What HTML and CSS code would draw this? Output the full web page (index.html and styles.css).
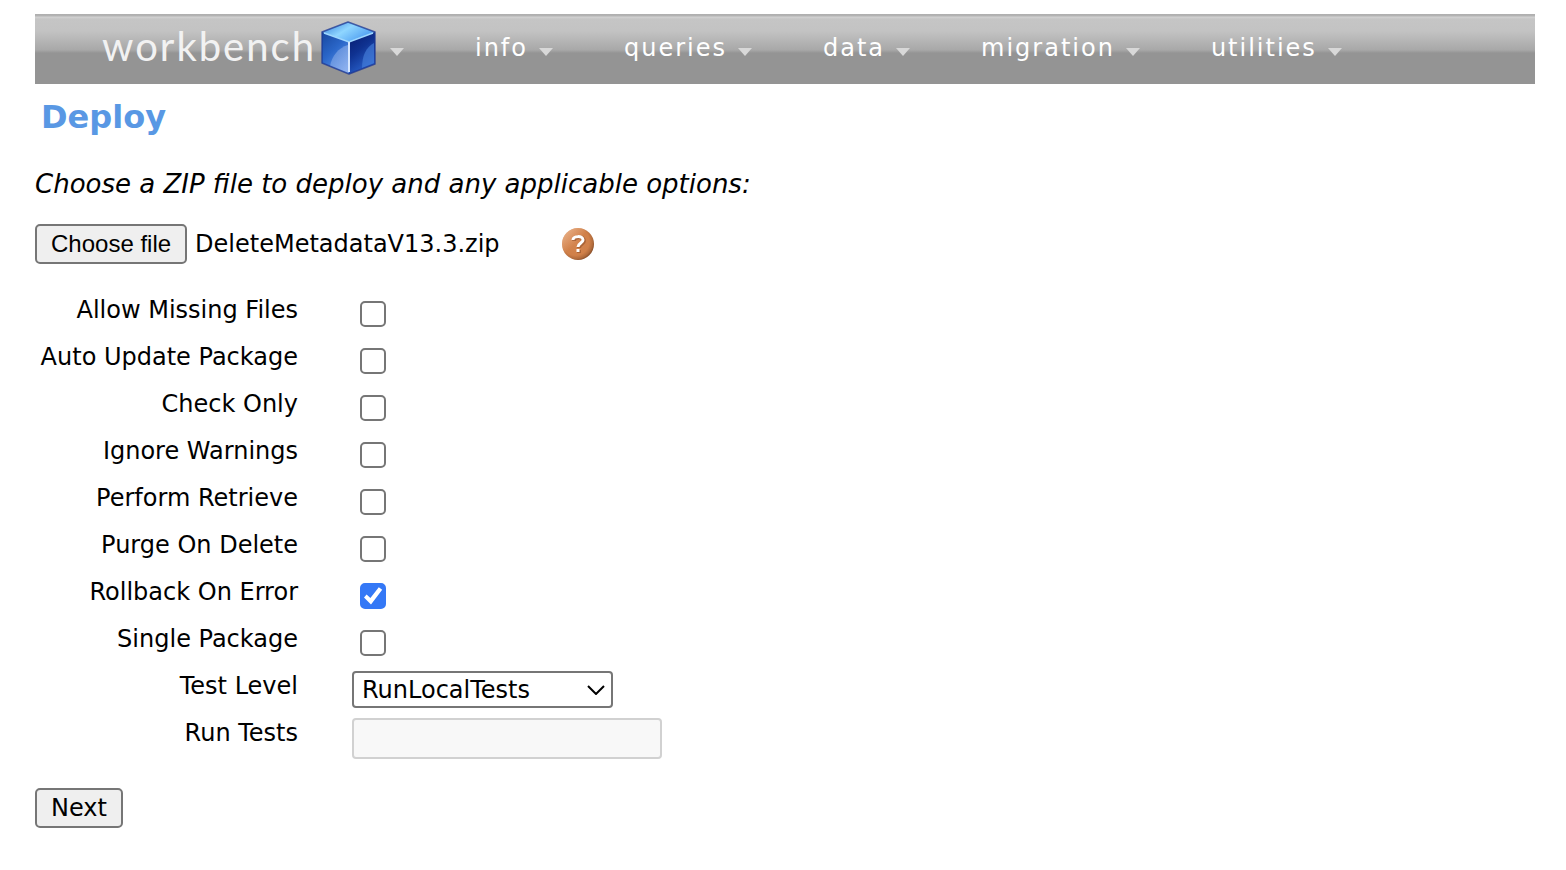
FILE: index.html
```html
<!DOCTYPE html>
<html lang="en">
<head>
<meta charset="UTF-8">
<title>Workbench - Deploy</title>
<link rel="stylesheet" href="styles.css">
</head>
<body>
	<nav class="navmenu">
		<a class="logo" href="#">
			<span class="logo-text">workbench</span>
			<svg class="cube" viewBox="0 0 58 56" aria-hidden="true">
				<defs>
					<linearGradient id="cubeTop" x1="0" y1="0" x2="1" y2="0.6">
						<stop offset="0" stop-color="#2f78d8"/>
						<stop offset="0.5" stop-color="#8fd6ff"/>
						<stop offset="1" stop-color="#4a9af0"/>
					</linearGradient>
					<linearGradient id="cubeLeft" x1="0" y1="0" x2="0.6" y2="1">
						<stop offset="0" stop-color="#17479f"/>
						<stop offset="0.5" stop-color="#2a66c8"/>
						<stop offset="1" stop-color="#5a92ea"/>
					</linearGradient>
					<linearGradient id="cubeRight" x1="0" y1="0" x2="0.5" y2="1">
						<stop offset="0" stop-color="#06196c"/>
						<stop offset="0.5" stop-color="#0f3291"/>
						<stop offset="1" stop-color="#2a62cc"/>
					</linearGradient>
					<linearGradient id="cubeShine" x1="0" y1="0" x2="1" y2="1">
						<stop offset="0" stop-color="#6f9be2"/>
						<stop offset="1" stop-color="#b4c8f2"/>
					</linearGradient>
				</defs>
				<path d="M28 2 L55 12 L29 22 L2 12 Z" fill="url(#cubeTop)"/>
				<path d="M2 12 L29 22 L29 54 L2 43 Z" fill="url(#cubeLeft)"/>
				<path d="M55 12 L29 22 L29 54 L55 44 Z" fill="url(#cubeRight)"/>
				<path d="M28 25 C18 28 12 36 10 46 L28 53 Z" fill="url(#cubeShine)" opacity="0.6"/>
				<path d="M54 23 C46 27 42 36 42 48 L54 43 Z" fill="#4a84de" opacity="0.6"/>
				<path d="M4 13 L29 22 L53 13" fill="none" stroke="#9fd8ff" stroke-width="1.5"/>
				<path d="M29 22 L29 52" fill="none" stroke="#d5e6ff" stroke-width="2"/>
				<path d="M28 2 L55 12 L55 44 L29 54 L2 43 L2 12 Z" fill="none" stroke="#1c3592" stroke-width="1.5" stroke-linejoin="round" opacity="0.75"/>
			</svg>
			<span class="arrow"></span>
		</a>
		<a href="#">info<span class="arrow"></span></a>
		<a href="#">queries<span class="arrow"></span></a>
		<a href="#">data<span class="arrow"></span></a>
		<a href="#">migration<span class="arrow"></span></a>
		<a href="#">utilities<span class="arrow"></span></a>
	</nav>

	<h1>Deploy</h1>

	<form class="deploy" onsubmit="return false">
		<p class="instructions">Choose a ZIP file to deploy and any applicable options:</p>

		<div class="file-row">
			<input type="file" id="deployFile" accept=".zip" aria-label="ZIP file" hidden>
			<button type="button" class="choose" onclick="chooseFile()">Choose file</button>
			<span id="fileName" class="file-name">DeleteMetadataV13.3.zip</span>
			<svg class="help" viewBox="0 0 32 32" role="img" aria-label="Help">
				<defs>
					<radialGradient id="helpFill" cx="0.42" cy="0.42" r="0.62">
						<stop offset="0" stop-color="#d4854f"/>
						<stop offset="0.7" stop-color="#d08049"/>
						<stop offset="0.88" stop-color="#b06a3b"/>
						<stop offset="1" stop-color="#7e4522"/>
					</radialGradient>
					<linearGradient id="helpShine" x1="0" y1="0" x2="1" y2="1">
						<stop offset="0" stop-color="#f6c9a8" stop-opacity="0.8"/>
						<stop offset="0.45" stop-color="#f6c9a8" stop-opacity="0"/>
					</linearGradient>
				</defs>
				<circle cx="16" cy="16" r="16" fill="url(#helpFill)"/>
				<circle cx="16" cy="16" r="16" fill="url(#helpShine)"/>
				<g fill="none" stroke="#8f5029" stroke-width="4" opacity="0.6">
					<path d="M12 13 C12 8 22 8 22 13 C22 16 17 16 17 20 M17 22 L17 25"/>
				</g>
				<g fill="none" stroke="#fff" stroke-width="3">
					<path d="M11 12 C11 8 21 7 21 12 C21 15 16 15 16 19 M16 21 L16 24"/>
				</g>
			</svg>
		</div>

		<div class="options">
			<div class="option">
				<label for="allowMissingFiles">Allow Missing Files</label>
				<input type="checkbox" id="allowMissingFiles">
			</div>
			<div class="option">
				<label for="autoUpdatePackage">Auto Update Package</label>
				<input type="checkbox" id="autoUpdatePackage">
			</div>
			<div class="option">
				<label for="checkOnly">Check Only</label>
				<input type="checkbox" id="checkOnly">
			</div>
			<div class="option">
				<label for="ignoreWarnings">Ignore Warnings</label>
				<input type="checkbox" id="ignoreWarnings">
			</div>
			<div class="option">
				<label for="performRetrieve">Perform Retrieve</label>
				<input type="checkbox" id="performRetrieve">
			</div>
			<div class="option">
				<label for="purgeOnDelete">Purge On Delete</label>
				<input type="checkbox" id="purgeOnDelete">
			</div>
			<div class="option">
				<label for="rollbackOnError">Rollback On Error</label>
				<input type="checkbox" id="rollbackOnError" checked>
			</div>
			<div class="option">
				<label for="singlePackage">Single Package</label>
				<input type="checkbox" id="singlePackage">
			</div>
			<div class="option">
				<label for="testLevel">Test Level</label>
				<div class="select-wrap">
					<select id="testLevel">
						<option>RunLocalTests</option>
					</select>
					<svg class="chevron" viewBox="0 0 18 10" aria-hidden="true">
						<path d="M1 1 L9 9 L17 1" fill="none" stroke="#000" stroke-width="2"/>
					</svg>
				</div>
			</div>
			<div class="option">
				<label for="runTests">Run Tests</label>
				<input type="text" id="runTests" disabled>
			</div>
		</div>

		<button type="submit" class="next">Next</button>
	</form>

	<script>
	var fileInput = document.getElementById("deployFile");

	function chooseFile() {
		fileInput.click();
	}

	fileInput.onchange = function() {
		if (fileInput.files.length > 0) {
			document.getElementById("fileName").innerText = fileInput.files[0].name;
		}
	};
	</script>
</body>
</html>
```
FILE: styles.css
```css
* {
	box-sizing: border-box;
}

body {
	margin: 14px 31px 40px 35px;
	background-color: #ffffff;
	color: #000000;
	font-family: Verdana, "DejaVu Sans", sans-serif;
	font-size: 24px;
	line-height: 30px;
}

/* top menu */
.navmenu {
	display: flex;
	align-items: center;
	gap: 71px;
	height: 70px;
	padding: 0 0 2px 67px;
	background: linear-gradient(#aeaeae 0, #b4b4b4 2px, #d2d2d2 3px, #c5c5c5 5px, #c3c3c3 17px, #a8a8a8 36px, #949494 39px, #949494 100%);
	letter-spacing: 2px;
}

.navmenu a {
	display: flex;
	align-items: center;
	color: #ffffff;
	text-decoration: none;
}

.arrow {
	margin: 7px 0 0 11px;
	border-top: 8px solid #d8d8d8;
	border-left: 7px solid transparent;
	border-right: 7px solid transparent;
}

.logo-text {
	padding-bottom: 4px;
	color: #f2f2f2;
	font-family: Lato, sans-serif;
	font-size: 40px;
}

.cube {
	width: 58px;
	height: 56px;
	margin: 0 1px 0 4px;
}

h1 {
	margin: 13px 6px 31px;
	color: #5998e4;
	font-size: 32px;
	line-height: 40px;
}

.instructions {
	margin: 0 0 24px;
	font-size: 26px;
	line-height: 32px;
	font-style: italic;
}

/* file picker */
.file-row {
	display: flex;
	align-items: center;
	margin-bottom: 31px;
}

.choose,
.next {
	height: 40px;
	padding: 0 14px;
	background-color: #efefef;
	border: 2px solid #767676;
	border-radius: 5px;
	color: #000000;
	font-family: inherit;
	font-size: 24px;
}

.choose {
	font-family: Arial, "Liberation Sans", sans-serif;
}

.file-name {
	margin-left: 8px;
}

.help {
	width: 32px;
	height: 32px;
	margin-left: 62px;
}

/* deploy options */
.option {
	display: flex;
	align-items: flex-start;
	gap: 54px;
	min-height: 47px;
}

.option label {
	width: 263px;
	text-align: right;
}

.option input[type="checkbox"] {
	appearance: none;
	width: 26px;
	height: 26px;
	margin: 6px 8px;
	background-color: #ffffff;
	border: 2px solid #767676;
	border-radius: 5px;
}

.option input[type="checkbox"]:checked {
	display: grid;
	place-items: center;
	background-color: #3478f6;
	border-color: #3478f6;
}

.option input[type="checkbox"]:checked::before {
	content: "";
	width: 20px;
	height: 20px;
	background-color: #ffffff;
	clip-path: polygon(5% 58%, 18% 43%, 37% 60%, 79% 6%, 96% 19%, 40% 92%);
}

.select-wrap {
	display: grid;
	align-items: center;
}

.select-wrap select,
.chevron {
	grid-area: 1 / 1;
}

.select-wrap select {
	appearance: none;
	width: 261px;
	height: 37px;
	padding: 0 8px;
	background-color: #ffffff;
	border: 2px solid #767676;
	border-radius: 4px;
	color: #000000;
	font-family: inherit;
	font-size: 24px;
}

.chevron {
	justify-self: end;
	width: 18px;
	height: 10px;
	margin-right: 8px;
	pointer-events: none;
}

.option input[type="text"] {
	width: 310px;
	height: 41px;
	padding: 0 6px;
	background-color: #f8f8f8;
	border: 2px solid #d1d1d1;
	border-radius: 4px;
	font-family: inherit;
	font-size: 24px;
}

.next {
	margin-top: 23px;
}
```
